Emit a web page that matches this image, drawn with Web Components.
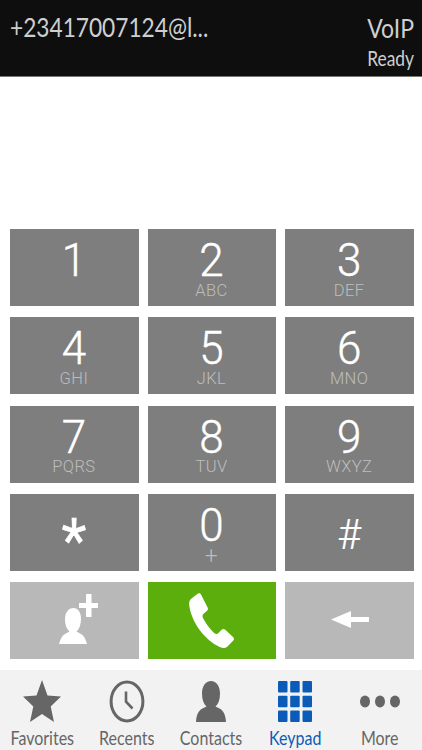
<!DOCTYPE html>
<html><head><meta charset="utf-8"><style>
html,body{margin:0;padding:0;background:#fff;}
body{width:422px;height:750px;overflow:hidden;display:flex;flex-direction:column;font-family:Lato,"Liberation Sans",sans-serif;}
</style></head><body>
<voip-header></voip-header>
<dial-pad>
<dial-key digit="1"></dial-key><dial-key digit="2" letters="ABC"></dial-key><dial-key digit="3" letters="DEF"></dial-key>
<dial-key digit="4" letters="GHI"></dial-key><dial-key digit="5" letters="JKL"></dial-key><dial-key digit="6" letters="MNO"></dial-key>
<dial-key digit="7" letters="PQRS"></dial-key><dial-key digit="8" letters="TUV"></dial-key><dial-key digit="9" letters="WXYZ"></dial-key>
<dial-key digit="*" kind="star"></dial-key><dial-key digit="0" letters="+" kind="plus"></dial-key><dial-key digit="#" kind="hash"></dial-key>
<action-key tone="light" style="padding:0 0 3px 8px"><svg width="39" height="50" viewBox="0 0 39 50"><path fill="#fff" d="M0 50 C1.500 45 3 41.500 6 40 L10.500 37.500 C7.500 35 6 30.500 6 25.500 C6 18.500 9.500 14 14.500 14 C19 14 22 18.500 22 24.500 C22 30 20.500 35 17.500 37.500 L22 40 C25 41.500 26.500 45 28 50Z"/><path fill="#fff" d="M20 9H27V0H32.500V9H39V14H32.500V23H27V14H20Z"/></svg></action-key>
<action-key tone="green"><svg width="45" height="55" viewBox="0 0 45 55"><path fill="#fff" d="M9 0.500 L2.500 5.500 C0.500 7 -0.300 9.500 0.300 13 C2 23 6 31 13 40 C20 48 26 52 32 54.500 C35 55.500 37 55 38.500 53.500 L44.300 47.500 C45.300 46.500 45.200 45 44 44 L36 36.500 C35 35.700 33.600 35.800 32.600 36.800 L29.500 40 C28.300 41.200 26.800 41.200 25.500 40.200 C21.500 36.700 16 29.500 13.800 24.500 C13.200 23 13.400 21.800 14.600 20.800 L17.800 18 C19 17 19.300 15.700 18.600 14.500 L12 1.500 C11.300 0.200 10 -0.200 9 0.500Z"/></svg></action-key>
<action-key tone="light" style="padding-bottom:2px"><svg width="38" height="17" viewBox="0 0 38 17"><path fill="#fff" d="M0 8.500 L20 0 V6 H38 V11 H20 V17Z"/></svg></action-key>
</dial-pad>
<tab-bar>
<tab-item label="Favorites"><svg width="38" height="43" viewBox="0 0 38 43"><path fill="#666" d="M19 0 L24.500 15.500 L38 16.500 L27.700 26.500 L31 42 L19 34 L7 42 L10.300 26.500 L0 16.500 L13.500 15.500Z"/></svg></tab-item>
<tab-item label="Recents"><svg width="36" height="43" viewBox="0 0 36 43"><ellipse cx="18" cy="21.500" rx="15.900" ry="19.400" fill="none" stroke="#666" stroke-width="3"/><path d="M17 11.500V21.700L23.500 28.500" fill="none" stroke="#666" stroke-width="2.600"/></svg></tab-item>
<tab-item label="Contacts"><svg width="30" height="41" viewBox="0 0 30 41"><path fill="#666" d="M0 41 C0.500 33.500 2.500 29.500 6.500 27.500 L10.500 25.500 C7.500 23 6 18.500 6 12.500 C6 5 9.700 0 15 0 C20.300 0 24 5 24 12.500 C24 18.500 22.500 23 19.500 25.500 L23.500 27.500 C27.500 29.500 29.500 33.500 30 41Z"/></svg></tab-item>
<tab-item label="Keypad" active><svg width="34" height="41" viewBox="0 0 34 41"><g fill="#0a5cb8"><rect x="0" y="0" width="9.500" height="11.500" rx="1"/><rect x="12.200" y="0" width="9.500" height="11.500" rx="1"/><rect x="24.500" y="0" width="9.500" height="11.500" rx="1"/><rect x="0" y="14.700" width="9.500" height="11.500" rx="1"/><rect x="12.200" y="14.700" width="9.500" height="11.500" rx="1"/><rect x="24.500" y="14.700" width="9.500" height="11.500" rx="1"/><rect x="0" y="29.500" width="9.500" height="11.500" rx="1"/><rect x="12.200" y="29.500" width="9.500" height="11.500" rx="1"/><rect x="24.500" y="29.500" width="9.500" height="11.500" rx="1"/></g></svg></tab-item>
<tab-item label="More"><svg width="40" height="41" viewBox="0 0 40 41"><g fill="#666"><ellipse cx="5" cy="20.500" rx="5" ry="6"/><ellipse cx="20" cy="20.500" rx="5" ry="6"/><ellipse cx="35" cy="20.500" rx="5" ry="6"/></g></svg></tab-item>
</tab-bar>
<script>
function def(name,html,init){customElements.define(name,class extends HTMLElement{connectedCallback(){if(this.shadowRoot)return;const r=this.attachShadow({mode:'open'});r.innerHTML=html;if(init)init(this,r);}});}
def('voip-header',`<style>
:host{display:flex;justify-content:space-between;height:77px;background:#0e0e0e;color:#cfcfcf;padding:0 8px 0 10px;box-sizing:border-box;border-bottom:1px solid #777;font-family:Lato,sans-serif;font-weight:400;flex:none}
.id{font-size:22.700px;line-height:22px;margin-top:14px;transform:scaleY(1.2);transform-origin:top left;white-space:nowrap}
.st{display:flex;flex-direction:column;align-items:flex-end}
.v{font-size:23px;line-height:22px;margin-top:14px;transform:scaleY(1.2);transform-origin:top right}
.r{font-size:17.400px;line-height:18px;margin-top:12px;transform:scaleY(1.2);transform-origin:top right}
</style><div class="id">+23417007124@l...</div><div class="st"><div class="v">VoIP</div><div class="r">Ready</div></div>`);
def('dial-pad',`<style>
:host{display:grid;grid-template-columns:128.800px 128.800px 128.800px;column-gap:8.800px;grid-auto-rows:77px;row-gap:11.250px;align-content:start;padding:152px 8px 0 10px;box-sizing:border-box;flex:none;height:593px}
</style><slot></slot>`);
def('dial-key',`<style>
:host{display:block;background:#7e7e7e;color:#fff;text-align:center;font-family:Roboto,sans-serif}
.w{height:77px;display:flex;flex-direction:column;align-items:center}
.d{font-size:44px;font-weight:300;line-height:40px;margin:11px 1px 0 0;transform:scaleY(1.05);height:40px;-webkit-text-stroke:.4px #fff}
.l{font-size:16.500px;font-weight:300;line-height:16px;height:16px;color:#bdbdbd;margin:2.500px 1px 0 0;letter-spacing:.4px}
:host([kind=star]) .d{margin-top:27px;font-size:58px;font-weight:400}
:host([kind=hash]) .d{margin-top:20px;font-size:41px;font-weight:300;-webkit-text-stroke:.2px #fff}
:host([kind=plus]) .l{font-size:23px;margin-top:5px;line-height:14px;height:14px}
</style><div class="w"><div class="d"></div><div class="l"></div></div>`,(h,r)=>{r.querySelector('.d').textContent=h.getAttribute('digit');r.querySelector('.l').textContent=h.getAttribute('letters')||'';});
def('action-key',`<style>
:host{display:flex;align-items:center;justify-content:center;background:#b8b8b8;box-sizing:border-box}
:host([tone=green]){background:#5cae0d}
</style><slot></slot>`);
def('tab-bar',`<style>
:host{display:grid;grid-template-columns:84.500px 84.500px 84px 84.500px 84.500px;height:80px;background:#f2f2f2;flex:none}
</style><slot></slot>`);
def('tab-item',`<style>
:host{display:flex;flex-direction:column;align-items:center;color:#666;font-family:Lato,sans-serif;font-size:16px;height:80px}
:host([active]){color:#0a5cb8}
.i{height:45px;margin-top:9px;display:flex;align-items:center;justify-content:center}
.t{line-height:18px;margin-top:5px;transform:scaleY(1.18);white-space:nowrap}
</style><div class="i"><slot></slot></div><div class="t"></div>`,(h,r)=>{r.querySelector('.t').textContent=h.getAttribute('label');});
</script>
</body></html>
